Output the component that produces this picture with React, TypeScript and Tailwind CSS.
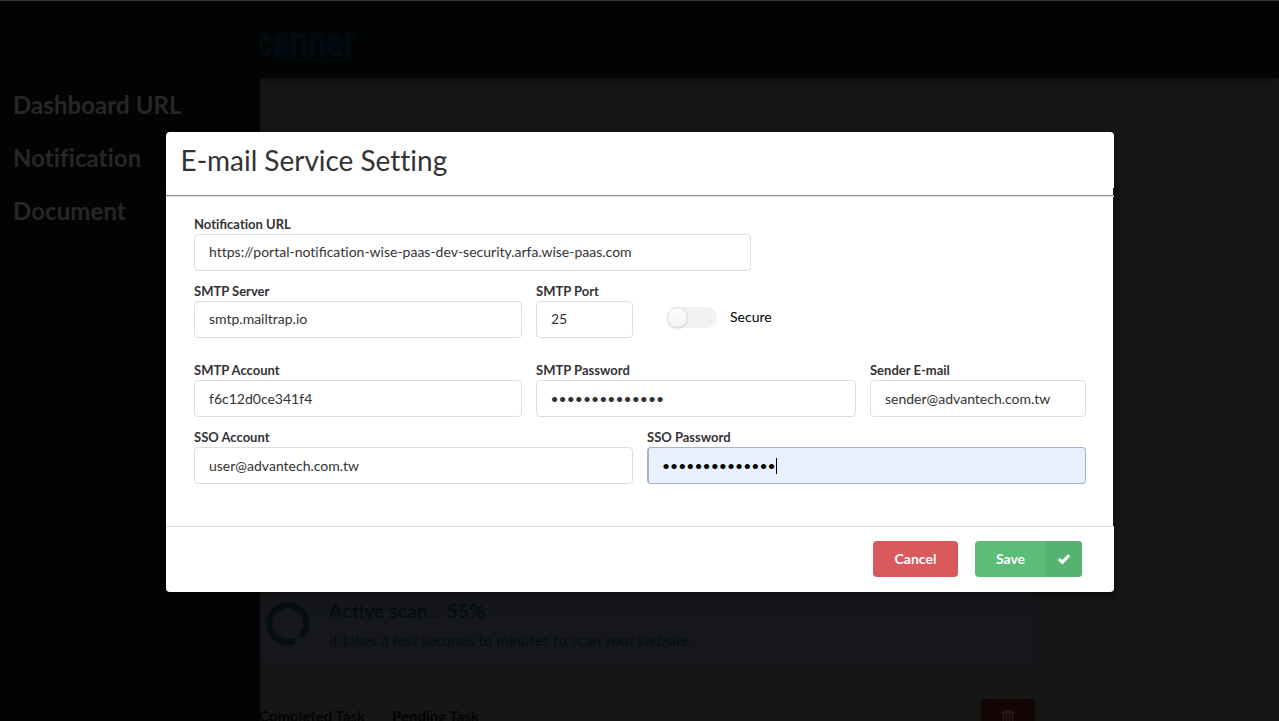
import React from 'react';

// Keeps "tt" and "ti" as separate letters instead of joined ligatures.
function Txt({ children }: { children: string }) {
  const parts = children.split(/(?<=t)(?=[ti])/);
  return (
    <span className="whitespace-pre">
      {parts.map((p, i) => (
        <span key={i} className="inline-block">{p}</span>
      ))}
    </span>
  );
}

function Field({ label, value, width, secret = false, focused = false, lift = false }: {
  label: string;
  value: string;
  width: string;
  secret?: boolean;
  focused?: boolean;
  lift?: boolean;
}) {
  const box = focused
    ? 'border-[#a9b2c4] border-l-2 bg-[#e8effd] text-black pl-[13px]'
    : secret
      ? 'border-[#dededf] bg-white text-[#333334] pl-[13.5px]'
      : 'border-[#dededf] bg-white text-[#333334] pl-[14px]';
  return (
    <div className={`${width} shrink-0`}>
      <div className="mb-[3px] h-[13px] text-[13px] leading-[13px] font-bold text-[#333334]"><Txt>{label}</Txt></div>
      <div className={`flex h-[37px] items-center rounded-[4px] border text-[14px] leading-[17px] ${lift ? 'pb-[2px]' : ''} ${box}`}>
        <span><Txt>{value}</Txt></span>
        {focused && <span className="h-4 w-px bg-black" />}
      </div>
    </div>
  );
}

const dots = '•'.repeat(14);

function Modal() {
  return (
    <div className="absolute top-[132px] left-[166px] flex h-[460px] w-[948px] flex-col shadow-[1px_3px_3px_0_rgba(0,0,0,0.2),1px_3px_15px_2px_rgba(0,0,0,0.2)]">
      <div className="h-[56px] rounded-t-[4px] bg-white pt-[10px] pl-[14.5px] text-[28px] leading-[36px] tracking-[-0.02px] text-[#333334]">
        <Txt>E-mail Service Setting</Txt>
      </div>
      <div className="flex h-[338px] w-[947px] flex-col bg-white">
        <div className="h-[8px] w-[948px] shrink-0 border-b border-[#8f8f8f] shadow-[0_1px_0_#e4e4e4]" />
        <div className="flex flex-col pt-[22px] pl-[28px]">
          <div className="flex h-[67px]">
            <Field label="Notification URL" value="https://portal-notification-wise-paas-dev-security.arfa.wise-paas.com" width="w-[557px]" lift />
          </div>
          <div className="flex h-[79px] gap-[14px]">
            <Field label="SMTP Server" value="smtp.mailtrap.io" width="w-[328px]" lift />
            <Field label="SMTP Port" value="25" width="w-[97px]" lift />
            <div className="mt-[22px] ml-[20px] flex h-[21px] items-center gap-[13px] text-[14px] text-black">
              <div className="h-[21px] w-[50px] rounded-full bg-[#f2f2f2]">
                <div className="size-[21px] rounded-full border border-[#d9d9da] bg-linear-to-b from-white to-[#f3f3f3] shadow-[0_1px_2px_rgba(34,36,38,0.15)]" />
              </div>
              <span className="pb-[2px]">Secure</span>
            </div>
          </div>
          <div className="flex h-[67px] gap-[14px]">
            <Field label="SMTP Account" value="f6c12d0ce341f4" width="w-[328px]" />
            <Field label="SMTP Password" value={dots} width="w-[320px]" secret />
            <Field label="Sender E-mail" value="sender@advantech.com.tw" width="w-[216px]" />
          </div>
          <div className="flex gap-[14px]">
            <Field label="SSO Account" value="user@advantech.com.tw" width="w-[439px]" />
            <Field label="SSO Password" value={dots} width="w-[439px]" secret focused />
          </div>
        </div>
      </div>
      <div className="flex h-[66px] items-start justify-end gap-[17px] rounded-b-[4px] border-t border-[#dededf] bg-white pt-[14px] pr-[32px] text-[14px] font-bold text-white">
        <div className="flex h-[36px] w-[85px] items-center justify-center rounded-[4px] bg-[#d9595c] pb-[2px]">Cancel</div>
        <div className="flex h-[36px] w-[107px] overflow-hidden rounded-[4px] bg-[#5bbd77]">
          <div className="flex w-[71px] items-center justify-center pb-[2px]">Save</div>
          <div className="flex w-[36px] items-center justify-center bg-[#56b270]">
            <svg viewBox="0 0 14 12" className="h-[12px] w-[14px]">
              <path d="M1.8 5.8 5.4 9.2 12.2 2.2" fill="none" stroke="#f1faf3" strokeWidth="3.2" />
            </svg>
          </div>
        </div>
      </div>
    </div>
  );
}

export default function App() {
  return (
    <div className="relative flex h-[721px] w-[1279px] overflow-hidden bg-[#161616] font-[Lato,sans-serif]">
      <aside className="h-full w-[260px] shrink-0 border-t border-[#373937] bg-[#030303] pt-[77px] text-[24px] leading-[30px] font-bold tracking-[0.08px] text-[#272727]">
        {['Dashboard URL', 'Notification', 'Document'].map((t) => (
          <div key={t} className="h-[53px] border-t border-[#060606] pt-[11px] pl-[13px]">
            <span className="[font-variant-ligatures:common-ligatures]"><Txt>{t}</Txt></span>
          </div>
        ))}
      </aside>
      <main className="flex h-full grow flex-col overflow-hidden">
        <header className="h-[78px] shrink-0 border-t border-[#373937] bg-[#020403] shadow-[0_1px_8px_rgba(0,0,0,0.5)]">
          <div className="-ml-[24px] w-[180px] origin-left scale-x-[0.73] pt-[16px] font-[Roboto,sans-serif] text-[44px] leading-[50px] font-black text-[#020a11] [-webkit-text-stroke:1px_#020a11]">
            Scanner
          </div>
        </header>
        <section className="mt-[507px] flex h-[79px] w-[775px] shrink-0 rounded-br-[4px] border-r border-b border-[#0f1518] bg-[#15171a] pt-[17px] pl-[5px]">
          <svg viewBox="0 0 44 44" className="size-[44px]">
            <path d="M29.5 38.7A18.5 18.5 0 1 1 35.5 34.8" fill="none" stroke="#070e11" strokeWidth="6" />
          </svg>
          <div className="-mt-[3px] ml-[20px] text-[#070e11]">
            <div className="text-[19.5px] leading-[24px] font-bold"><Txt>Active scan... 55%</Txt></div>
            <div className="mt-[8px] text-[15px] leading-[18px] tracking-[0.06px]">It takes a few seconds to minutes to scan your website.</div>
          </div>
        </section>
        <div className="flex h-[57px] shrink-0 pt-[35px]">
          <div className="mt-[7px] -ml-px w-[133px] text-[15px] leading-[20px] font-bold text-[#040404]">Completed Task</div>
          <div className="mt-[7px] w-[589px] text-[15px] leading-[20px] font-bold text-[#040404]">Pending Task</div>
          <div className="flex h-[36px] w-[54px] justify-center rounded-[4px] bg-[#150504] pt-[11px]">
            <svg viewBox="0 0 14 14" className="size-[14px]" fill="none" stroke="#231f1e">
              <path d="M1 2.5h12M4.5 1h5" strokeWidth="2" />
              <path d="M2.5 3v10h9V3M5 4v9M7 4v9M9 4v9" strokeWidth="1" />
            </svg>
          </div>
        </div>
      </main>
      <Modal />
    </div>
  );
}
